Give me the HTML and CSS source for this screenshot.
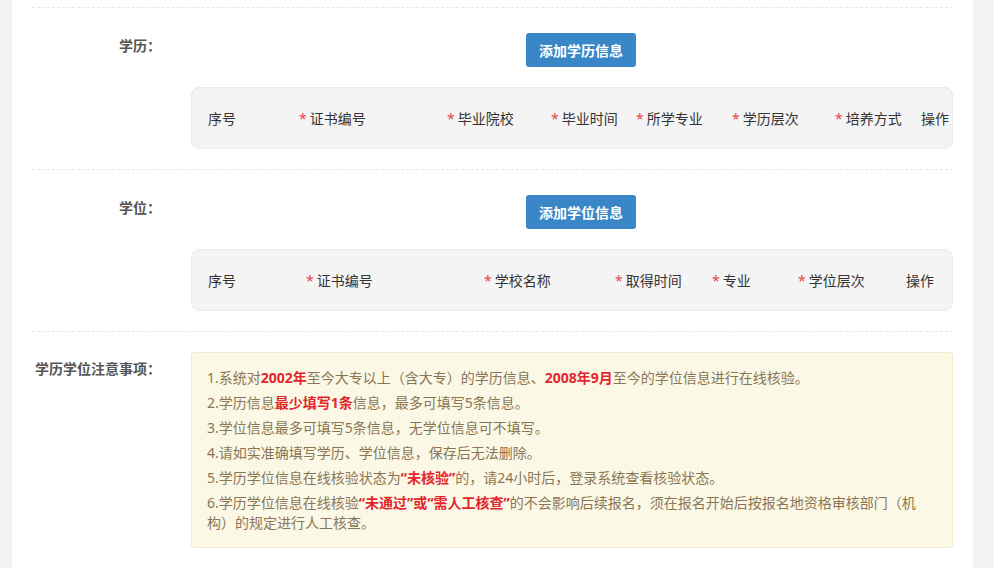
FILE: index.html
```html
<!DOCTYPE html>
<html lang="zh-CN">
<head>
    <meta charset="UTF-8">
    <meta name="viewport" content="width=device-width, initial-scale=1.0">
    <title>学历学位信息</title>
    <link rel="stylesheet" href="styles.css">
</head>
<body>

    <div class="panel">

        <div class="form-row">
            <div class="form-label">学历：</div>
            <div class="form-content">
                <button class="add-button">添加学历信息</button>
                <div class="info-table edu-table">
                    <span>序号</span>
                    <span><i class="req">*</i>证书编号</span>
                    <span><i class="req">*</i>毕业院校</span>
                    <span><i class="req">*</i>毕业时间</span>
                    <span><i class="req">*</i>所学专业</span>
                    <span><i class="req">*</i>学历层次</span>
                    <span><i class="req">*</i>培养方式</span>
                    <span>操作</span>
                </div>
            </div>
        </div>

        <div class="form-row">
            <div class="form-label">学位：</div>
            <div class="form-content">
                <button class="add-button">添加学位信息</button>
                <div class="info-table degree-table">
                    <span>序号</span>
                    <span><i class="req">*</i>证书编号</span>
                    <span><i class="req">*</i>学校名称</span>
                    <span><i class="req">*</i>取得时间</span>
                    <span><i class="req">*</i>专业</span>
                    <span><i class="req">*</i>学位层次</span>
                    <span>操作</span>
                </div>
            </div>
        </div>

        <div class="form-row notice-row">
            <div class="form-label">学历学位注意事项：</div>
            <div class="form-content">
                <div class="notice">
                    <p>1.系统对<b>2002年</b>至今大专以上（含大专）的学历信息、<b>2008年9月</b>至今的学位信息进行在线核验。</p>
                    <p>2.学历信息<b>最少填写1条</b>信息，最多可填写5条信息。</p>
                    <p>3.学位信息最多可填写5条信息，无学位信息可不填写。</p>
                    <p>4.请如实准确填写学历、学位信息，保存后无法删除。</p>
                    <p>5.学历学位信息在线核验状态为<b>“未核验”</b>的，请24小时后，登录系统查看核验状态。</p>
                    <p>6.学历学位信息在线核验<b>“未通过”或“需人工核查”</b>的不会影响后续报名，须在报名开始后按报名地资格审核部门（机构）的规定进行人工核查。</p>
                </div>
            </div>
        </div>

    </div>

</body>
</html>
```

FILE: styles.css
```css
body {
    margin: 0;
    font-family: "Noto Sans", "Noto Sans CJK SC", sans-serif;
    font-size: 14px;
    color: #333;
    background-color: #f3f3f3;
}

.panel {
    margin-left: 12px;
    width: 961px;
    height: 568px;
    padding: 7px 20px 0;
    box-sizing: border-box;
    background-color: white;
    overflow: hidden;
}

.form-row {
    display: flex;
    border-top: 1px dashed #e6e6e6;
    padding: 25px 0 20px;
}

.notice-row {
    padding-top: 20px;
}

.form-label {
    width: 159px;
    flex-shrink: 0;
    padding: 3px 30px 0 0;
    box-sizing: border-box;
    text-align: right;
    font-weight: bold;
    color: #555;
    line-height: 20px;
}

.notice-row .form-label {
    padding-top: 7px;
}

.form-content {
    flex: 1;
}

.add-button {
    display: block;
    margin: 0 0 20px 335px;
    width: 110px;
    height: 34px;
    padding: 0;
    border: none;
    border-radius: 3px;
    background-color: #3a87c8;
    color: white;
    font-family: inherit;
    font-size: 14px;
    font-weight: bold;
    cursor: pointer;
}

.info-table {
    display: grid;
    align-items: center;
    height: 62px;
    box-sizing: border-box;
    padding-left: 16px;
    border: 1px solid #ebebeb;
    border-radius: 8px;
    background-color: #f4f4f4;
    white-space: nowrap;
}

.edu-table {
    grid-template-columns: 91px 148px 104px 85px 96px 103px 86px 1fr;
}

.degree-table {
    grid-template-columns: 98px 178px 131px 97px 86px 108px 1fr;
}

.req {
    font-style: normal;
    color: #e8474c;
    margin-right: 3px;
}

.notice {
    padding: 15px 22px 14px 15px;
    border: 1px solid #f2ead0;
    border-radius: 3px;
    background-color: #fbf8e6;
    color: #8a7655;
    line-height: 20px;
}

.notice p {
    margin: 0 0 5px;
}

.notice p:last-child {
    margin-bottom: 0;
}

.notice b {
    color: #e3262c;
}
```
